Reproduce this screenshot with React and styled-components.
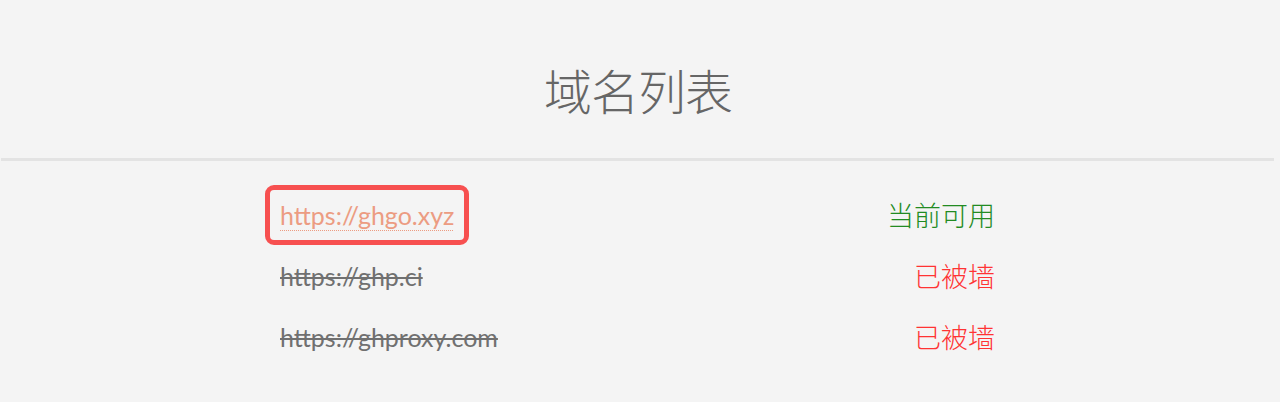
import React from 'react';
import styled, { createGlobalStyle } from 'styled-components';

const GlobalStyle = createGlobalStyle`
  body {
    margin: 0;
    background-color: #F4F4F4;
    font-family: Lato, "Noto Sans CJK SC", sans-serif;
  }
`;

const Header = styled.header`
  height: 158px;
  display: flex;
  align-items: center;
  justify-content: center;
`;

const Title = styled.h1`
  margin: 0 4px 0 0;
  padding-top: 20px;
  font-family: "Noto Sans CJK SC", sans-serif;
  font-size: 48px;
  font-weight: 300;
  color: #666666;
  letter-spacing: -1px;
`;

const Divider = styled.hr`
  margin: 0 6px 0 1px;
  border: 0;
  height: 3px;
  background-color: #E3E3E3;
`;

const List = styled.ul`
  list-style: none;
  width: 750px;
  margin: 23px auto 0 auto;
  padding: 0;
`;

const Row = styled.li`
  height: 61px;
  display: flex;
  align-items: center;
  justify-content: space-between;
  padding-right: 20px;
`;

const Link = styled.a`
  box-sizing: border-box;
  height: 60px;
  display: flex;
  align-items: center;
  padding: 0 10px;
  border: 5px solid ${props => (props.current ? '#F75050' : 'transparent')};
  border-radius: 9px;
  font-size: 25px;
  color: ${props => (props.blocked ? '#707070' : '#EC9C82')};
  text-decoration: ${props => (props.blocked ? 'line-through' : 'underline dotted')};
  text-decoration-thickness: ${props => (props.blocked ? '1.5px' : '1px')};
  text-underline-offset: 5px;
`;

const Status = styled.span`
  font-family: "Noto Sans CJK SC", sans-serif;
  font-size: 27px;
  font-weight: 300;
  color: ${props => (props.ok ? '#228B22' : '#FF3333')};
`;

const domains = [
  { url: 'https://ghgo.xyz', ok: true },
  { url: 'https://ghp.ci', ok: false },
  { url: 'https://ghproxy.com', ok: false },
];

const App = () => (
  <>
    <GlobalStyle />
    <Header>
      <Title>域名列表</Title>
    </Header>
    <Divider />
    <List>
      {domains.map((d, i) => (
        <Row key={d.url}>
          <Link href={d.url} current={i === 0} blocked={!d.ok}>{d.url}</Link>
          <Status ok={d.ok}>{d.ok ? '当前可用' : '已被墙'}</Status>
        </Row>
      ))}
    </List>
  </>
);

export default App;
